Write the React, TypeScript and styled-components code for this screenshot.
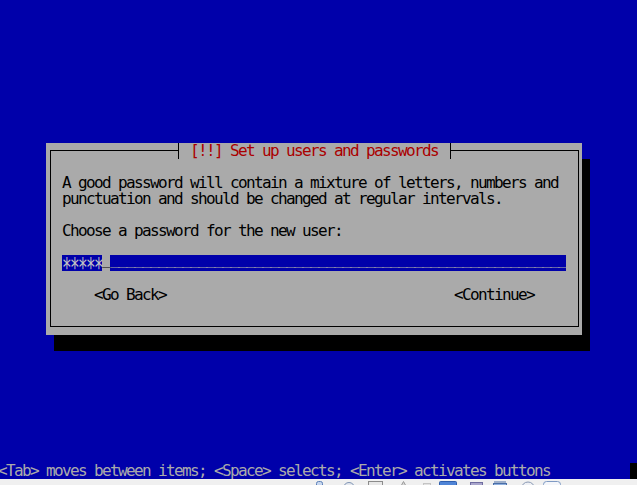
import React from "react";
import styled, { createGlobalStyle } from "styled-components";

const BLUE = "#0000aa";
const GRAY = "#aaaaaa";
const RED = "#aa0000";

const GlobalStyle = createGlobalStyle`
  html, body { margin: 0; padding: 0; background: ${BLUE}; overflow: hidden; }
  #root { width: 637px; height: 485px; overflow: hidden; }
`;

const Page = styled.div`
  width: 637px;
  height: 485px;
  overflow: hidden;
  background: ${BLUE};
  display: flex;
  flex-direction: column;
`;

/* 80x30 text console, 8x16 cells, shifted by the capture crop */
const Screen = styled.div`
  flex: none;
  width: 640px;
  height: 480px;
  margin: -1px 0 0 -2px;
  display: flex;
  flex-direction: column;
  font-family: "DejaVu Sans Mono", monospace;
  font-size: 16px;
  line-height: 16px;
  letter-spacing: -1.633px;
  white-space: pre;
  color: ${GRAY};
`;

const Dialog = styled.section`
  flex: none;
  margin: 144px 0 0 48px;
  width: 536px;
  height: 192px;
  background: ${GRAY};
  box-shadow: 8px 16px 0 #000;
  display: flex;
`;

const Frame = styled.div`
  position: relative;
  flex: 1;
  margin: 7px 3px 8px 4px;
  border: 1px solid #000;
  padding: 24px 12px 0 11px;
  display: flex;
  flex-direction: column;
  color: #000;
`;

const Title = styled.h1`
  position: absolute;
  top: -8px;
  left: 127px;
  margin: 0;
  height: 16px;
  padding: 0 4px 0 3px;
  border-left: 1px solid #000;
  border-right: 1px solid #000;
  background: ${GRAY};
  color: ${RED};
  font: inherit;
  letter-spacing: inherit;
`;

const Line = styled.p<{ $rows?: number }>`
  margin: 0 0 16px;
  height: ${(p) => (p.$rows ?? 1) * 16}px;
`;

const Field = styled.div`
  display: flex;
  width: 504px;
  height: 16px;
  background: ${BLUE};
  color: ${GRAY};
`;

const Masked = styled.span`
  display: inline-block;
  height: 16px;
  color: #c4c4c4;
  transform: scaleY(1.7);
  transform-origin: 0 0;
`;

const Underscores = styled.span<{ $cursor?: boolean }>`
  display: inline-block;
  height: 16px;
  line-height: 7px;
  background: ${(p) => (p.$cursor ? GRAY : "transparent")};
  color: ${(p) => (p.$cursor ? "#000" : GRAY)};
`;

const Buttons = styled.div`
  margin-top: 16px;
  padding: 0 32px;
  display: flex;
  justify-content: space-between;
`;

const Button = styled.span`
  color: #000;
`;

const Status = styled.footer`
  margin-top: auto;
  height: 16px;
  display: flex;
  justify-content: space-between;
  color: ${GRAY};
`;

const ConsoleCursor = styled.span`
  width: 8px;
  height: 16px;
  background: #000;
`;

const HostBar = styled.div`
  flex: 1;
  background: #f0f0f0;
  display: flex;
  align-items: flex-start;
  padding: 2px 0 0 316px;
`;

const HostIcon = styled.svg<{ $gap: number }>`
  flex: none;
  margin-left: ${(p) => p.$gap}px;
  height: 16px;
`;

export default function App() {
  return (
    <Page>
      <GlobalStyle />
      <Screen>
        <Dialog>
          <Frame>
            <Title>{" [!!] Set up users and passwords "}</Title>
            <Line $rows={2}>
              {"A good password will contain a mixture of letters, numbers and\npunctuation and should be changed at regular intervals."}
            </Line>
            <Line>Choose a password for the new user:</Line>
            <Field>
              <Masked>*****</Masked>
              <Underscores $cursor>_</Underscores>
              <Underscores>{"_".repeat(57)}</Underscores>
            </Field>
            <Buttons>
              <Button>&lt;Go Back&gt;</Button>
              <Button>&lt;Continue&gt;</Button>
            </Buttons>
          </Frame>
        </Dialog>
        <Status>
          <span>{"<Tab> moves between items; <Space> selects; <Enter> activates buttons"}</span>
          <ConsoleCursor />
        </Status>
      </Screen>
      <HostBar>
        <HostIcon $gap={0} width="7" viewBox="0 0 7 16">
          <rect x="0.5" y="0.5" width="6" height="12" rx="2" fill="#c6d6ee" stroke="#5b7fb8" />
        </HostIcon>
        <HostIcon $gap={20} width="12" viewBox="0 0 12 16">
          <circle cx="6" cy="7" r="5.5" fill="#e4e8ee" stroke="#7f94b4" />
        </HostIcon>
        <HostIcon $gap={13} width="15" viewBox="0 0 15 16">
          <rect x="0.5" y="0.5" width="14" height="12" fill="#e8e8e8" stroke="#8c8c8c" />
        </HostIcon>
        <HostIcon $gap={17} width="7" viewBox="0 0 7 16">
          <path d="M3.5 0.5 L6.5 6 L0.5 6 Z" fill="#d8d8d8" stroke="#9a9a9a" />
        </HostIcon>
        <HostIcon $gap={16} width="8" viewBox="0 0 8 16">
          <rect x="0.5" y="2.5" width="7" height="10" fill="#e2e2e2" stroke="#c4c4c4" />
        </HostIcon>
        <HostIcon $gap={8} width="18" viewBox="0 0 18 16">
          <rect x="0.5" y="0.5" width="17" height="12" rx="1" fill="#4f84d6" stroke="#2f5fae" />
        </HostIcon>
        <HostIcon $gap={13} width="13" viewBox="0 0 13 16">
          <rect x="0.5" y="1.5" width="12" height="11" fill="#a9a6cc" stroke="#6f6ca0" />
        </HostIcon>
        <HostIcon $gap={10} width="14" viewBox="0 0 14 16">
          <path d="M2 0 V2 M4 0 V2 M6 0 V2 M8 0 V2 M10 0 V2 M12 0 V2" stroke="#4a6fa8" />
          <rect x="0.5" y="2.5" width="13" height="10" fill="#8fb0de" stroke="#4a6fa8" />
        </HostIcon>
        <HostIcon $gap={14} width="14" viewBox="0 0 14 16">
          <circle cx="7" cy="7.5" r="6.5" fill="#eef0f4" stroke="#8898b4" />
        </HostIcon>
        <HostIcon $gap={8} width="18" viewBox="0 0 18 16">
          <rect x="0.5" y="0.5" width="17" height="12" rx="3" fill="#f4f6fa" stroke="#7f9ac4" />
        </HostIcon>
      </HostBar>
    </Page>
  );
}
